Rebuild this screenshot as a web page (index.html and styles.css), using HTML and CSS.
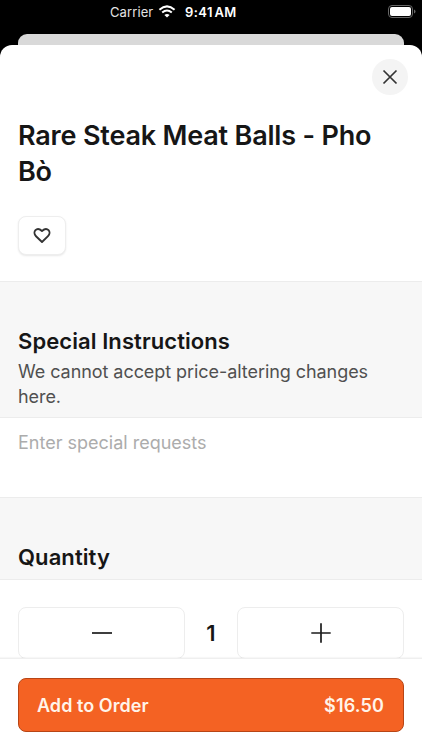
FILE: index.html
```html
<!DOCTYPE html>
<html lang="en">
<head>
<meta charset="utf-8">
<title>Add to Order</title>
<link rel="stylesheet" href="styles.css">
</head>
<body>
<div class="phone">
  <header class="status">
    <span class="carrier">Carrier</span>
    <svg class="wifi" width="18" height="13" viewBox="0 0 18 13"><path d="M1.4 4.7Q9 -2 16.6 4.7M4.2 7.6Q9 3.4 13.8 7.6" fill="none" stroke="#fff" stroke-width="2"/><path d="M6.4 9.9Q9 7.9 11.6 9.9L9 12.5Z" fill="#fff"/></svg>
    <span class="time">9:41 AM</span>
    <svg class="battery" width="28" height="13" viewBox="0 0 28 13"><rect x=".5" y=".5" width="24" height="12" rx="3.5" fill="none" stroke="#666"/><rect x="2" y="2" width="21" height="9" rx="2" fill="#fff"/><path d="M26 4.5q1.5 .6 1.5 2t-1.5 2z" fill="#666"/></svg>
  </header>
  <div class="behind"></div>
  <main class="sheet">
    <section class="intro">
      <button class="close" aria-label="Close"><svg width="16" height="16" viewBox="0 0 16 16"><path d="M1.5 1.5l13 13M14.5 1.5l-13 13"/></svg></button>
      <h1>Rare Steak Meat Balls - Pho Bò</h1>
      <button class="favorite" aria-label="Favorite"><svg width="18" height="17" viewBox="0 0 18 17"><path d="M9 15L3 9.2C-1 5.2 3.6-1 9 4C14.4-1 19 5.2 15 9.2Z"/></svg></button>
    </section>
    <section class="band instructions">
      <h2>Special Instructions</h2>
      <p>We cannot accept price-altering changes here.</p>
    </section>
    <div class="requests">Enter special requests</div>
    <section class="band quantity"><h2>Quantity</h2></section>
    <div class="stepper">
      <button class="step" aria-label="Less"><svg width="22" height="22" viewBox="0 0 22 22"><path d="M1 11h20"/></svg></button>
      <span class="count">1</span>
      <button class="step" aria-label="More"><svg width="22" height="22" viewBox="0 0 22 22"><path d="M1.3 11h19.4M11 1.3v19.4"/></svg></button>
    </div>
    <footer><button class="order"><span>Add to Order</span><span class="price">$16.50</span></button></footer>
  </main>
</div>
</body>
</html>
```
FILE: styles.css
```css
* { box-sizing: border-box; }
body { margin: 0; font-family: Inter, sans-serif; color: #161616; }
button { font: inherit; color: inherit; padding: 0; margin: 0; }
svg { display: block; flex: none; }
h1, h2, p { margin: 0; }
.phone { width: 422px; height: 750px; background: #000; overflow: hidden; display: flex; flex-direction: column; }
.status { height: 34px; padding: 5px 6px 0 110px; display: flex; align-items: flex-start; color: #fff; font-size: 13px; line-height: 14px; }
.carrier { width: 48px; letter-spacing: .1px; color: #e4e4e4; }
.wifi { margin-right: 9px; }
.time { font-weight: 600; letter-spacing: .4px; word-spacing: -2px; }
.battery { margin-left: auto; }
.behind { height: 11px; margin: 0 18px; background: #d9d9d9; border-radius: 9px 9px 0 0; }
.sheet { flex: 1; background: #fff; border-radius: 12px 12px 0 0; display: flex; flex-direction: column; }
.intro { height: 236px; padding: 14px 14px 0 18px; display: flex; flex-direction: column; align-items: flex-start; }
.close { width: 36px; height: 36px; border: 0; border-radius: 50%; background: #f4f4f4; display: grid; place-items: center; align-self: flex-end; }
.close svg, .favorite svg, .step svg { fill: none; stroke: #333; stroke-width: 1.7; stroke-linejoin: round; }
.favorite svg { stroke-width: 1.9; }
.step svg { stroke: #1c1c1c; }
h1 { margin-top: 23px; font-size: 27px; line-height: 36px; font-weight: 600; letter-spacing: -.19px; }
.favorite { width: 48px; height: 39px; margin-top: 26px; border: 1px solid #eee; border-radius: 8px; background: #fff; box-shadow: 0 1px 2px #00000018; display: grid; place-items: center; }
.band { background: #f7f7f7; border-top: 1px solid #ececec; border-bottom: 1px solid #ececec; padding: 45px 18px 0; }
h2 { font-size: 22px; line-height: 29px; font-weight: 600; letter-spacing: .08px; }
.instructions { height: 137px; }
p { font-size: 18px; line-height: 25px; color: #505050; margin-top: 3px; letter-spacing: -.06px; }
.requests { height: 79px; padding: 13px 18px; font-size: 18px; line-height: 24px; color: #acacac; }
.quantity { height: 83px; padding-top: 45px; }
.stepper { height: 78px; padding: 27px 18px 0; display: grid; grid-template-columns: 167px 1fr 167px; }
.step { height: 52px; border: 1px solid #ededed; border-radius: 8px; background: #fff; display: grid; place-items: center; }
.count { height: 52px; font-size: 22px; font-weight: 600; display: grid; place-items: center; }
footer { height: 92px; padding: 19px 18px; border-top: 1px solid #efefef; box-shadow: 0 -1px 1px #00000008; background: #fff; }
.order { width: 100%; height: 54px; border: 1px solid #b84515; border-radius: 8px; background: #f46223; color: #fff4ea; display: flex; align-items: center; justify-content: space-between; padding: 0 19px 0 18px; font-size: 18px; font-weight: 600; letter-spacing: .05px; }
.price { letter-spacing: .15px; }
```
